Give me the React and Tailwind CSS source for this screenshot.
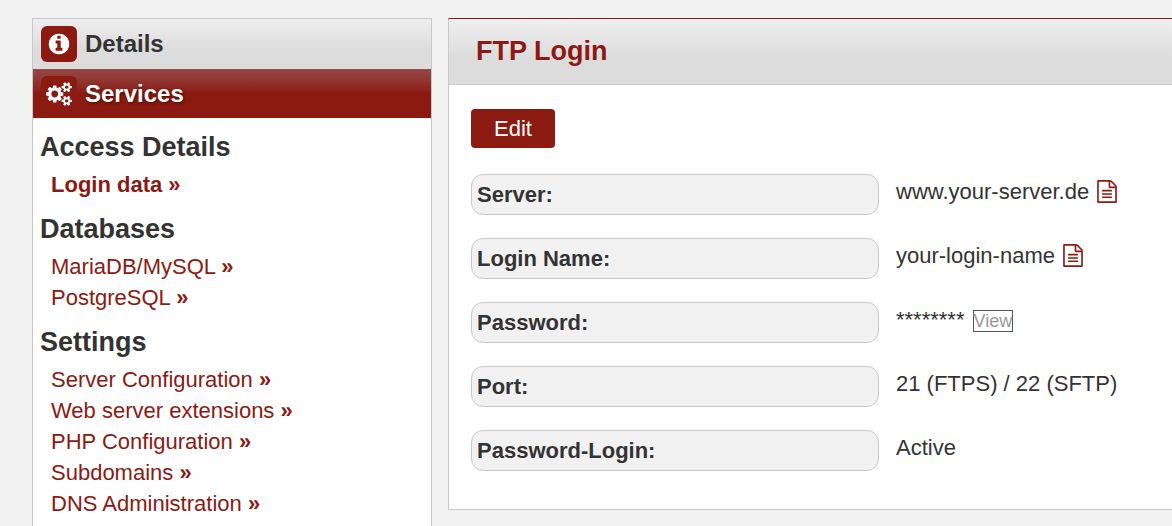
const font = "font-['Liberation_Sans',Arial,sans-serif]";

function InfoIcon() {
  return (
    <svg viewBox="0 0 1792 1792" className="size-6 fill-white" aria-hidden="true">
      <path d="M1152 1376v-160q0-14-9-23t-23-9h-96v-512q0-14-9-23t-23-9h-320q-14 0-23 9t-9 23v160q0 14 9 23t23 9h96v320h-96q-14 0-23 9t-9 23v160q0 14 9 23t23 9h448q14 0 23-9t9-23zm-128-896v-160q0-14-9-23t-23-9h-192q-14 0-23 9t-9 23v160q0 14 9 23t23 9h192q14 0 23-9t9-23zm640 416q0 209-103 385.5t-279.5 279.5-385.5 103-385.5-103-279.5-279.5-103-385.5 103-385.5 279.5-279.5 385.5-103 385.5 103 279.5 279.5 103 385.5z" />
    </svg>
  );
}

function CogsIcon() {
  return (
    <svg viewBox="0 0 1920 1792" className="h-6 w-[26px] fill-white" aria-hidden="true">
      <path d="M896 896q0-106-75-181t-181-75-181 75-75 181 75 181 181 75 181-75 75-181zm768 512q0-52-38-90t-90-38-90 38-38 90q0 53 37.5 90.5t90.5 37.5 90.5-37.5 37.5-90.5zm0-1024q0-52-38-90t-90-38-90 38-38 90q0 53 37.5 90.5t90.5 37.5 90.5-37.5 37.5-90.5zm-384 421v185q0 10-7 19.5t-16 10.5l-155 24q-11 35-32 76 34 48 90 115 7 11 7 20 0 12-7 19-23 30-82.5 89.5t-78.5 59.5q-11 0-21-7l-115-90q-37 19-77 31-11 108-23 155-7 24-30 24h-186q-11 0-20-7.5t-10-17.5l-23-153q-34-10-75-31l-118 89q-7 7-20 7-11 0-21-8-144-133-144-160 0-9 7-19 10-14 41-53t47-61q-23-44-35-82l-152-24q-10-1-17-9.5t-7-19.5v-185q0-10 7-19.5t16-10.5l155-24q11-35 32-76-34-48-90-115-7-11-7-20 0-12 7-20 22-30 82-89t79-59q11 0 21 7l115 90q34-18 77-32 11-108 23-154 7-24 30-24h186q11 0 20 7.5t10 17.5l23 153q34 10 75 31l118-89q8-7 20-7 11 0 21 8 144 133 144 160 0 8-7 19-12 16-42 54t-45 60q23 48 34 82l152 23q10 2 17 10.5t7 19.5zm640 533v140q0 16-149 31-12 27-30 52 51 113 51 138 0 4-4 7-122 71-124 71-8 0-46-47t-52-68q-20 2-30 2t-30-2q-14 21-52 68t-46 47q-2 0-124-71-4-3-4-7 0-25 51-138-18-25-30-52-149-15-149-31v-140q0-16 149-31 13-29 30-52-51-113-51-138 0-4 4-7 4-2 35-20t59-34 30-16q8 0 46 46.5t52 67.5q20-2 30-2t30 2q51-71 92-112l6-2q4 0 124 70 4 3 4 7 0 25-51 138 17 23 30 52 149 15 149 31zm0-1024v140q0 16-149 31-12 27-30 52 51 113 51 138 0 4-4 7-122 71-124 71-8 0-46-47t-52-68q-20 2-30 2t-30-2q-14 21-52 68t-46 47q-2 0-124-71-4-3-4-7 0-25 51-138-18-25-30-52-149-15-149-31v-140q0-16 149-31 13-29 30-52-51-113-51-138 0-4 4-7 4-2 35-20t59-34 30-16q8 0 46 46.5t52 67.5q20-2 30-2t30 2q51-71 92-112l6-2q4 0 124 70 4 3 4 7 0 25-51 138 17 23 30 52 149 15 149 31z" />
    </svg>
  );
}

function CopyButton({ label }) {
  return (
    <button type="button" aria-label={label} className="cursor-pointer">
      <svg viewBox="0 0 1536 1792" className="h-[23px] w-5 fill-[#8f1a12]" aria-hidden="true">
        <path d="M1468 380q28 28 48 76t20 88v1152q0 40-28 68t-68 28h-1344q-40 0-68-28t-28-68v-1600q0-40 28-68t68-28h896q40 0 88 20t76 48zm-444-244v376h376q-10-29-22-41l-313-313q-12-12-41-22zm384 1528v-1024h-416q-40 0-68-28t-28-68v-416h-768v1536h1280zm-1024-864q0-14 9-23t23-9h704q14 0 23 9t9 23v64q0 14-9 23t-23 9h-704q-14 0-23-9t-9-23v-64zm736 224q14 0 23 9t9 23v64q0 14-9 23t-23 9h-704q-14 0-23-9t-9-23v-64q0-14 9-23t23-9h704zm0 256q14 0 23 9t9 23v64q0 14-9 23t-23 9h-704q-14 0-23-9t-9-23v-64q0-14 9-23t23-9h704z" />
      </svg>
    </button>
  );
}

const groups = [
  { title: "Access Details", links: ["Login data"] },
  { title: "Databases", links: ["MariaDB/MySQL", "PostgreSQL"] },
  {
    title: "Settings",
    links: [
      "Server Configuration",
      "Web server extensions",
      "PHP Configuration",
      "Subdomains",
      "DNS Administration",
    ],
  },
];
const current = "Login data";

function Sidebar() {
  return (
    <aside className="w-[400px] shrink-0 border border-b-0 border-[#c8c8c8] bg-[#fefefe]">
      <a
        href="#details"
        className="flex h-[50px] items-center gap-2 bg-linear-to-b from-[#efefef] to-[#dcdcdc] to-60% px-2 text-2xl font-bold text-[#333]"
      >
        <span className="flex size-9 items-center justify-center rounded-md bg-[#8b1a10]">
          <InfoIcon />
        </span>
        Details
      </a>
      <a
        href="#services"
        aria-current="true"
        className="flex h-[49px] items-center gap-2 bg-linear-to-b from-[#944848] to-[#8b1a10] to-50% px-2 text-2xl font-bold text-white text-shadow-[1px_1px_3px_#00000080]"
      >
        <span className="flex size-9 items-center justify-center rounded-md bg-[#8b1a10]">
          <CogsIcon />
        </span>
        Services
      </a>
      <nav className="flex flex-col gap-3.5 px-[7px] pt-3.5">
        {groups.map((group) => (
          <section key={group.title}>
            <h2 className="mb-1.5 text-[27px] leading-[31px] font-bold text-[#333]">
              {group.title}
            </h2>
            <ul className="pl-[11px] text-[22px] leading-[31px] text-[#8b1a14]">
              {group.links.map((link) => (
                <li key={link}>
                  <a href="#link" className={link === current ? "font-bold" : ""}>
                    {link} <span className="font-bold">»</span>
                  </a>
                </li>
              ))}
            </ul>
          </section>
        ))}
      </nav>
    </aside>
  );
}

function Row({ label, children }) {
  return (
    <div className="grid grid-cols-[minmax(0,408px)_1fr] gap-[17px]">
      <dt className="h-[41px] rounded-xl border border-[#c8c8c8] bg-[#f1f1f1] px-[5px] leading-[39px] font-bold">
        {label}
      </dt>
      <dd className="flex h-[34px] items-center gap-2">{children}</dd>
    </div>
  );
}

export default function App() {
  return (
    <div className={`${font} flex min-h-screen gap-4 bg-[#f1f1f1] pt-[18px] pl-8 text-[#333]`}>
      <Sidebar />
      <main className="min-w-0 flex-1 self-start border border-r-0 border-[#c8c8c8] border-t-[#8b1a14] bg-white">
        <header className="border-b border-[#c8c8c8] bg-linear-to-b from-[#efefef] to-[#dcdcdc] to-60% px-[27px] pt-4 pb-[17px]">
          <h1 className="text-[27px] leading-8 font-bold text-[#8b1a14]">FTP Login</h1>
        </header>
        <div className="px-[22px] pt-6 pb-[38px] text-[22px]">
          <button
            type="button"
            className="block h-[39px] w-[84px] cursor-pointer rounded bg-[#8b1a10] text-white"
          >
            Edit
          </button>
          <dl className="mt-[26px] flex flex-col gap-[23px]">
            <Row label="Server:">
              www.your-server.de
              <CopyButton label="Copy server" />
            </Row>
            <Row label="Login Name:">
              your-login-name
              <CopyButton label="Copy login name" />
            </Row>
            <Row label="Password:">
              ********
              <button
                type="button"
                className="mt-1 cursor-pointer border border-[#555] text-lg leading-5 text-[#999]"
              >
                View
              </button>
            </Row>
            <Row label="Port:">21 (FTPS) / 22 (SFTP)</Row>
            <Row label="Password-Login:">Active</Row>
          </dl>
        </div>
      </main>
    </div>
  );
}
